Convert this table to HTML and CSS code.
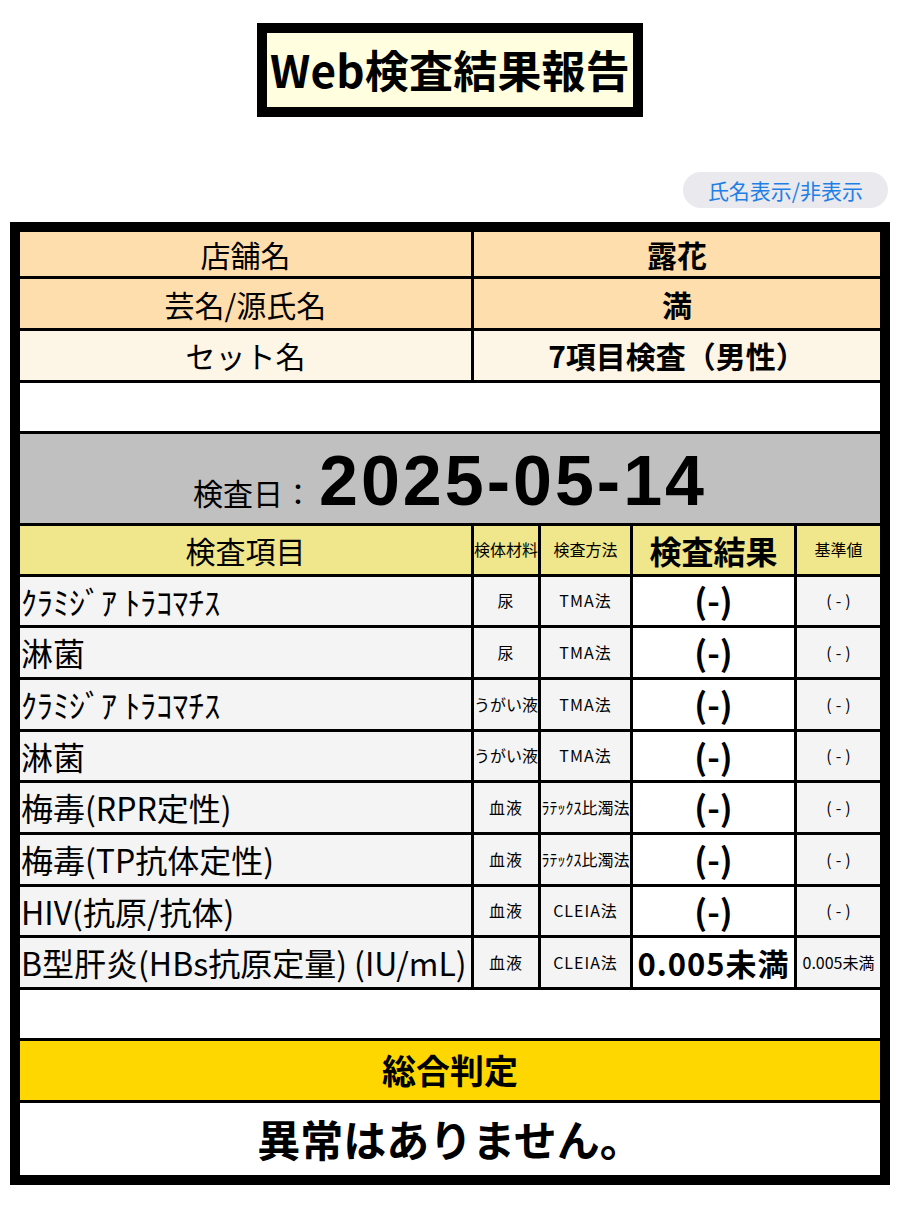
FILE: index.html
```html
<!DOCTYPE html>
<html lang="ja">
<head>
<meta charset="utf-8">
<title>Web検査結果報告</title>
<link rel="stylesheet" href="styles.css">
</head>
<body>
<div class="page">
  <header class="title-wrap">
    <h1 class="title">Web検査結果報告</h1>
  </header>
  <div class="toggle-row">
    <button class="toggle" type="button">氏名表示/非表示</button>
  </div>
  <table class="report">
    <colgroup>
      <col class="c-item">
      <col class="c-mat">
      <col class="c-method">
      <col class="c-result">
      <col class="c-ref">
    </colgroup>
    <tr class="info peach h1r">
      <th class="label">店舗名</th>
      <td class="value" colspan="4">露花</td>
    </tr>
    <tr class="info peach h2r">
      <th class="label">芸名/源氏名</th>
      <td class="value" colspan="4">満</td>
    </tr>
    <tr class="info cream h3r">
      <th class="label">セット名</th>
      <td class="value" colspan="4">7項目検査（男性）</td>
    </tr>
    <tr class="spacer h3r"><td colspan="5"></td></tr>
    <tr class="date-row">
      <td colspan="5"><span class="date-label">検査日：</span><span class="date-value">2025-05-14</span></td>
    </tr>
    <tr class="head-row">
      <th class="h-item">検査項目</th>
      <th class="h-small">検体材料</th>
      <th class="h-small">検査方法</th>
      <th class="h-result">検査結果</th>
      <th class="h-small">基準値</th>
    </tr>
    <tr class="data">
      <td class="item">ｸﾗﾐｼﾞｱ ﾄﾗｺﾏﾁｽ</td>
      <td class="small">尿</td>
      <td class="small">TMA法</td>
      <td class="result">(-)</td>
      <td class="small"><span class="neg">(-)</span></td>
    </tr>
    <tr class="data">
      <td class="item">淋菌</td>
      <td class="small">尿</td>
      <td class="small">TMA法</td>
      <td class="result">(-)</td>
      <td class="small"><span class="neg">(-)</span></td>
    </tr>
    <tr class="data">
      <td class="item">ｸﾗﾐｼﾞｱ ﾄﾗｺﾏﾁｽ</td>
      <td class="small tight">うがい液</td>
      <td class="small">TMA法</td>
      <td class="result">(-)</td>
      <td class="small"><span class="neg">(-)</span></td>
    </tr>
    <tr class="data">
      <td class="item">淋菌</td>
      <td class="small tight">うがい液</td>
      <td class="small">TMA法</td>
      <td class="result">(-)</td>
      <td class="small"><span class="neg">(-)</span></td>
    </tr>
    <tr class="data">
      <td class="item">梅毒(RPR定性)</td>
      <td class="small">血液</td>
      <td class="small tight">ﾗﾃｯｸｽ比濁法</td>
      <td class="result">(-)</td>
      <td class="small"><span class="neg">(-)</span></td>
    </tr>
    <tr class="data">
      <td class="item">梅毒(TP抗体定性)</td>
      <td class="small">血液</td>
      <td class="small tight">ﾗﾃｯｸｽ比濁法</td>
      <td class="result">(-)</td>
      <td class="small"><span class="neg">(-)</span></td>
    </tr>
    <tr class="data">
      <td class="item">HIV(抗原/抗体)</td>
      <td class="small">血液</td>
      <td class="small">CLEIA法</td>
      <td class="result">(-)</td>
      <td class="small"><span class="neg">(-)</span></td>
    </tr>
    <tr class="data">
      <td class="item">B型肝炎(HBs抗原定量) (IU/mL)</td>
      <td class="small">血液</td>
      <td class="small">CLEIA法</td>
      <td class="result num">0.005未満</td>
      <td class="small tight">0.005未満</td>
    </tr>
    <tr class="spacer h4r"><td colspan="5"></td></tr>
    <tr class="verdict-head">
      <th colspan="5">総合判定</th>
    </tr>
    <tr class="verdict">
      <td colspan="5">異常はありません。</td>
    </tr>
  </table>
</div>
</body>
</html>
```

FILE: styles.css
```css
html, body {
  margin: 0;
  padding: 0;
  background: #ffffff;
}

body {
  font-family: "Noto Sans CJK JP", "Noto Sans", sans-serif;
  color: #000000;
}

.page {
  width: 900px;
  padding-top: 23px;
}

.title-wrap {
  display: flex;
  justify-content: center;
}

.title {
  margin: 0;
  box-sizing: border-box;
  height: 94px;
  border: 10px solid #000000;
  background: #ffffe0;
  padding: 0 3px;
  font-size: 44px;
  font-weight: 700;
  line-height: 72px;
  letter-spacing: 0.2px;
}

.toggle-row {
  display: flex;
  justify-content: flex-end;
  padding-right: 12px;
  margin-top: 55px;
}

.toggle {
  box-sizing: border-box;
  height: 36px;
  width: 205px;
  border: none;
  border-radius: 18px;
  background: #e9e9ee;
  color: #1f7fe5;
  font-family: "Noto Sans CJK JP", "Noto Sans", sans-serif;
  font-size: 21px;
  line-height: 36px;
  padding: 0;
}

.report {
  margin: 14px 0 0 10px;
  width: 880px;
  table-layout: fixed;
  border-collapse: separate;
  border-spacing: 3px;
  border: 7px solid #000000;
  background: #000000;
}

.c-item { width: 451px; }
.c-mat { width: 64px; }
.c-method { width: 89px; }
.c-result { width: 161px; }
.c-ref { width: 83px; }

.report th,
.report td {
  padding: 0;
  text-align: center;
  vertical-align: middle;
  line-height: 1.2;
  font-weight: 400;
  white-space: nowrap;
  overflow: hidden;
}

.h1r th, .h1r td { height: 44px; }
.h2r th, .h2r td { height: 49px; }
.h3r th, .h3r td { height: 48.5px; }
.h4r td { height: 48px; }

.info .label {
  font-size: 30px;
}

.info .value {
  font-size: 30px;
  font-weight: 700;
}

.peach th,
.peach td {
  background: #ffdead;
}

.cream th,
.cream td {
  background: #fdf5e6;
}

.spacer td {
  background: #ffffff;
}

.report .date-row td {
  height: 89px;
  background: #c0c0c0;
  line-height: 1;
  padding-top: 4px;
  box-sizing: border-box;
}

.date-label {
  font-size: 30px;
  line-height: 1;
}

.date-value {
  font-family: "Liberation Sans", Arial, sans-serif;
  font-size: 70px;
  font-weight: 700;
  line-height: 1;
  letter-spacing: 3px;
  margin-left: 6px;
}

.head-row th {
  height: 47.5px;
  background: #f0e68c;
}

.head-row .h-item {
  font-size: 30px;
}

.head-row .h-small {
  font-size: 16px;
}

.head-row .h-result {
  font-size: 32px;
  font-weight: 700;
}

.data td {
  height: 48.7px;
  background: #f4f4f4;
}

.data .item {
  text-align: left;
  padding-left: 1px;
  font-size: 32px;
}

.data .small {
  font-size: 16px;
  letter-spacing: 1px;
}

.data .small.tight {
  letter-spacing: 0;
}

.data .neg {
  letter-spacing: 4px;
  margin-right: -4px;
}

.data .result {
  background: #ffffff;
  font-size: 34px;
  font-weight: 700;
}

.data .result.num {
  font-size: 31px;
  letter-spacing: 1px;
}

.verdict-head th {
  height: 59px;
  background: #ffd700;
  font-size: 34px;
  font-weight: 700;
}

.verdict td {
  height: 72px;
  background: #ffffff;
  font-size: 43px;
  font-weight: 700;
}
```
